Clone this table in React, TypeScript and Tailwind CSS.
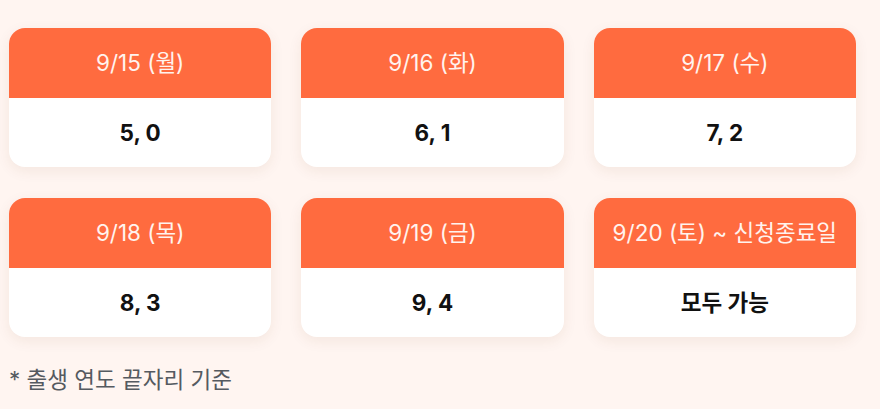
const DAYS: [string, string][] = [
  ['9/15 (월)', '5, 0'],
  ['9/16 (화)', '6, 1'],
  ['9/17 (수)', '7, 2'],
  ['9/18 (목)', '8, 3'],
  ['9/19 (금)', '9, 4'],
  ['9/20 (토) ~ 신청종료일', '모두 가능'],
];

export default function App() {
  return (
    <div
      className="min-h-[409px] w-[880px] bg-[#fff5f1] pl-[9px] pr-[24px] pt-[28px]"
      style={{ fontFamily: 'Inter, "Noto Sans CJK KR", sans-serif' }}
    >
      <div className="grid grid-cols-3 gap-x-[30px] gap-y-[31px]">
        {DAYS.map(([day, nums]) => (
          <div
            key={day}
            className="overflow-hidden rounded-[16px] bg-white shadow-[0_4px_14px_rgba(120,60,30,0.08)]"
          >
            <div className="flex h-[70px] items-center justify-center bg-[#ff6b3f] text-[22.5px] text-[#fff3ee]">
              {day}
            </div>
            <div className="flex h-[69px] items-center justify-center text-[22.5px] font-bold text-[#111]">
              {nums}
            </div>
          </div>
        ))}
      </div>
      <p className="mt-[28px] text-[22.5px] leading-[30px] text-[#555a60]">* 출생 연도 끝자리 기준</p>
    </div>
  );
}
